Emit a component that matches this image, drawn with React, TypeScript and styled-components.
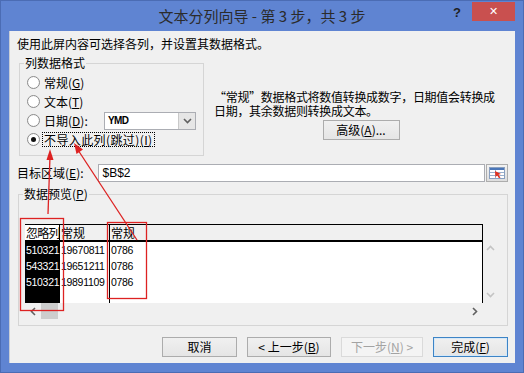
import styled, { createGlobalStyle } from 'styled-components';

const GlobalStyle = createGlobalStyle`
  html, body {
    margin: 0;
    padding: 0;
    background: #5f84d2;
  }
  body {
    font-family: 'Noto Sans CJK SC', 'Liberation Sans', sans-serif;
    font-size: 12px;
    color: #000;
  }
  * {
    box-sizing: border-box;
  }
`;

const previewRows = [
  ['510321', '19670811', '0786'],
  ['543321', '19651211', '0786'],
  ['510321', '19891109', '0786'],
];

const formats = [
  { label: '常规', key: 'G' },
  { label: '文本', key: 'T' },
  { label: '日期', key: 'D' },
];

export default function App() {
  return (
    <>
      <GlobalStyle />
      <Window>
        <TitleBar>
          <span />
          <Title>文本分列向导 - 第 3 步，共 3 步</Title>
          <TitleControls>
            <HelpMark>?</HelpMark>
            <CloseButton>✕</CloseButton>
          </TitleControls>
        </TitleBar>

        <Client>
          <Intro>使用此屏内容可选择各列，并设置其数据格式。</Intro>

          <TopRow>
            <GroupBox $width={185} $height={93}>
              <Legend>列数据格式</Legend>
              <RadioList>
                {formats.map(f => (
                  <RadioRow key={f.key}>
                    <Radio />
                    <RadioLabel $width={f.key === 'D' ? 60 : undefined}>
                      {f.label}(<u>{f.key}</u>){f.key === 'D' ? ':' : ''}
                    </RadioLabel>
                    {f.key === 'D' ? (
                      <DateSelect>
                        <SelectValue>YMD</SelectValue>
                        <SelectArrow>
                          <ChevronDown />
                        </SelectArrow>
                      </DateSelect>
                    ) : null}
                  </RadioRow>
                ))}
                <RadioRow>
                  <Radio $checked />
                  <FocusLabel>
                    不导入此列(跳过)(<u>I</u>)
                  </FocusLabel>
                </RadioRow>
              </RadioList>
            </GroupBox>

            <Description>
              <DescText>
                &ldquo;常规&rdquo;数据格式将数值转换成数字，日期值会转换成
                <br />
                日期，其余数据则转换成文本。
              </DescText>
              <PushButton $width={77}>
                高级(<u>A</u>)...
              </PushButton>
            </Description>
          </TopRow>

          <TargetRow>
            <TargetLabel>
              目标区域(<u>E</u>):
            </TargetLabel>
            <TargetInput>$B$2</TargetInput>
            <RangeButton>
              <RangeIcon />
            </RangeButton>
          </TargetRow>

          <GroupBox $width={490} $height={132} $top={12}>
            <Legend>
              数据预览(<u>P</u>)
            </Legend>
            <Preview>
              <DataArea>
                <HeaderRow>
                  <HeaderCell $ignored>忽略列</HeaderCell>
                  <HeaderCell>常规</HeaderCell>
                  <HeaderCell $divider>常规</HeaderCell>
                </HeaderRow>
                <DataBody>
                  {[0, 1, 2].map(col => (
                    <DataColumn
                      key={col}
                      $ignored={col === 0}
                      $divider={col === 2}
                    >
                      {previewRows.map((row, i) => (
                        <DataLine key={i}>{row[col]}</DataLine>
                      ))}
                    </DataColumn>
                  ))}
                </DataBody>
              </DataArea>
              <VScroll>
                <ScrollGlyph>
                  <ChevronUp />
                </ScrollGlyph>
                <ScrollGlyph>
                  <ChevronDown color="#c4c4c4" />
                </ScrollGlyph>
              </VScroll>
              <HScroll>
                <HArrow>
                  <ChevronLeft />
                </HArrow>
                <HThumb />
                <HArrow>
                  <ChevronRight />
                </HArrow>
              </HScroll>
              <ScrollCorner />
            </Preview>
          </GroupBox>

          <ButtonRow>
            <PushButton $width={75}>取消</PushButton>
            <PushButton $width={84}>
              &lt; 上一步(<u>B</u>)
            </PushButton>
            <PushButton $width={82} $disabled>
              下一步(<u>N</u>) &gt;
            </PushButton>
            <PushButton $width={75} $default>
              完成(<u>F</u>)
            </PushButton>
          </ButtonRow>
        </Client>

        <Annotations width="524" height="373" viewBox="0 0 524 373">
          <rect x="20.5" y="218.5" width="43" height="92" />
          <rect x="107.5" y="222.5" width="39" height="76" />
          <line x1="48" y1="214" x2="50" y2="156" />
          <polygon points="50,149 46.5,160 53.5,160" />
          <line x1="137" y1="240" x2="78" y2="150" />
          <polygon points="74,143 76.5,154 83,149.5" />
        </Annotations>
      </Window>
    </>
  );
}

function ChevronDown({ color = '#606060' }: { color?: string }) {
  return (
    <svg width="9" height="6" viewBox="0 0 9 6">
      <polyline
        points="1,1 4.5,4.5 8,1"
        fill="none"
        stroke={color}
        strokeWidth="1.6"
      />
    </svg>
  );
}

function ChevronUp() {
  return (
    <svg width="9" height="6" viewBox="0 0 9 6">
      <polyline
        points="1,5 4.5,1.5 8,5"
        fill="none"
        stroke="#c4c4c4"
        strokeWidth="1.6"
      />
    </svg>
  );
}

function ChevronLeft() {
  return (
    <svg width="6" height="9" viewBox="0 0 6 9">
      <polyline
        points="5,1 1.5,4.5 5,8"
        fill="none"
        stroke="#606060"
        strokeWidth="1.6"
      />
    </svg>
  );
}

function ChevronRight() {
  return (
    <svg width="6" height="9" viewBox="0 0 6 9">
      <polyline
        points="1,1 4.5,4.5 1,8"
        fill="none"
        stroke="#606060"
        strokeWidth="1.6"
      />
    </svg>
  );
}

function RangeIcon() {
  return (
    <svg width="16" height="12" viewBox="0 0 16 12">
      <rect x="0.5" y="0.5" width="15" height="11" fill="#fff" stroke="#8aa0c0" />
      <rect x="1" y="1" width="14" height="2" fill="#4a76b8" />
      <line x1="1" y1="5.5" x2="15" y2="5.5" stroke="#9ab0cc" />
      <line x1="1" y1="8.5" x2="15" y2="8.5" stroke="#9ab0cc" />
      <line x1="6.5" y1="3" x2="6.5" y2="11" stroke="#9ab0cc" />
      <polygon points="6,4 12,7 9.5,7.8 11.5,10.5 10,11.3 8.2,8.6 6.5,10" fill="#e03020" />
    </svg>
  );
}

const Window = styled.div`
  position: relative;
  width: 524px;
  height: 373px;
  background: #5f84d2;
  border: 1px solid #4b6cb4;
  display: flex;
  flex-direction: column;
`;

const TitleBar = styled.div`
  height: 30px;
  display: grid;
  grid-template-columns: 1fr auto 1fr;
  align-items: start;
`;

const Title = styled.div`
  padding-top: 5px;
  font-size: 15px;
  line-height: 20px;
  color: #2b2b2b;
  white-space: nowrap;
`;

const TitleControls = styled.div`
  display: flex;
  justify-content: flex-end;
  align-items: flex-start;
  gap: 11px;
  padding-right: 8px;
`;

const HelpMark = styled.span`
  margin-top: 4px;
  font-family: 'Liberation Sans', sans-serif;
  font-weight: bold;
  font-size: 13px;
  color: #1f1f1f;
`;

const CloseButton = styled.div`
  width: 43px;
  height: 19px;
  margin-top: 1px;
  background: #c9504f;
  color: #fff;
  font-family: 'DejaVu Sans', sans-serif;
  font-weight: bold;
  font-size: 11px;
  display: flex;
  align-items: center;
  justify-content: center;
`;

const Client = styled.div`
  margin-left: 8px;
  width: 506px;
  height: 332px;
  background: #f0f0f0;
  border-left: 1px solid #c8cdd6;
  padding: 0 7px;
  display: flex;
  flex-direction: column;
`;

const Intro = styled.div`
  margin-top: 5px;
  line-height: 16px;
  white-space: nowrap;
`;

const TopRow = styled.div`
  display: flex;
  align-items: flex-start;
  gap: 10px;
  margin-top: 11px;
  margin-left: 1px;
`;

const GroupBox = styled.div<{ $width: number; $height: number; $top?: number }>`
  position: relative;
  width: ${p => p.$width}px;
  height: ${p => p.$height}px;
  margin-top: ${p => p.$top ?? 0}px;
  margin-left: 1px;
  border: 1px solid #d5d5d5;
  flex-shrink: 0;
`;

const Legend = styled.span`
  position: absolute;
  top: -9px;
  left: 4px;
  padding: 0 1px;
  line-height: 16px;
  background: #f0f0f0;
  white-space: nowrap;
`;

const RadioList = styled.div`
  display: flex;
  flex-direction: column;
  padding: 9px 0 0 7px;
`;

const RadioRow = styled.div`
  display: flex;
  align-items: center;
  height: 19px;
`;

const Radio = styled.span<{ $checked?: boolean }>`
  width: 13px;
  height: 13px;
  border-radius: 50%;
  border: 1px solid #8c8c8c;
  background: radial-gradient(circle, #fff 55%, #e8e8e8 100%);
  display: flex;
  align-items: center;
  justify-content: center;
  margin-right: 4px;
  flex-shrink: 0;

  &::after {
    content: '';
    width: 5px;
    height: 5px;
    border-radius: 50%;
    background: ${p => (p.$checked ? '#111' : 'transparent')};
  }
`;

const RadioLabel = styled.span<{ $width?: number }>`
  line-height: 16px;
  white-space: nowrap;
  width: ${p => (p.$width ? `${p.$width}px` : 'auto')};
`;

const FocusLabel = styled.span`
  line-height: 13px;
  white-space: nowrap;
  margin-left: -1px;
  padding: 0 1px;
  letter-spacing: 0.4px;
  outline: 1px dotted #000;
`;

const DateSelect = styled.div`
  width: 92px;
  height: 18px;
  display: flex;
  border: 1px solid #abadb3;
  background: #fff;
`;

const SelectValue = styled.span`
  flex: 1;
  padding-left: 3px;
  font-family: 'Liberation Sans', sans-serif;
  font-weight: bold;
  font-size: 10px;
  letter-spacing: -0.6px;
  line-height: 16px;
`;

const SelectArrow = styled.span`
  width: 17px;
  border-left: 1px solid #c9c9c9;
  background: #e6e6e6;
  display: flex;
  align-items: center;
  justify-content: center;
`;

const Description = styled.div`
  width: 294px;
  margin-top: 27px;
  display: flex;
  flex-direction: column;
  align-items: center;
`;

const DescText = styled.div`
  align-self: stretch;
  line-height: 14px;
  white-space: nowrap;
  letter-spacing: -0.3px;
`;

const PushButton = styled.div<{ $width: number; $disabled?: boolean; $default?: boolean }>`
  width: ${p => p.$width}px;
  height: 20px;
  margin-top: 2px;
  display: flex;
  align-items: center;
  justify-content: center;
  white-space: nowrap;
  line-height: 16px;
  color: ${p => (p.$disabled ? '#a3a3a3' : '#000')};
  background: ${p =>
    p.$disabled ? '#f4f4f4' : 'linear-gradient(#f0f0f0, #e5e5e5)'};
  border: 1px solid
    ${p => (p.$default ? '#3d84c6' : p.$disabled ? '#dadada' : '#acacac')};
  box-shadow: ${p => (p.$default ? 'inset 0 0 0 1px #d6e8f7' : 'none')};
`;

const TargetRow = styled.div`
  display: flex;
  align-items: center;
  margin-top: 8px;
  height: 18px;
`;

const TargetLabel = styled.span`
  width: 81px;
  line-height: 16px;
  white-space: nowrap;
`;

const TargetInput = styled.div`
  width: 390px;
  height: 18px;
  border: 1px solid #abadb3;
  background: #fff;
  padding-left: 4px;
  font-family: 'Liberation Sans', sans-serif;
  font-size: 12px;
  line-height: 16px;
`;

const RangeButton = styled.div`
  width: 22px;
  height: 18px;
  margin-left: 1px;
  border: 1px solid #adadad;
  background: linear-gradient(#f2f2f2, #dedede);
  display: flex;
  align-items: center;
  justify-content: center;
`;

const Preview = styled.div`
  margin: 29px 0 0 6px;
  display: grid;
  grid-template-columns: 458px 14px;
  grid-template-rows: 79px 16px;
`;

const DataArea = styled.div`
  display: flex;
  flex-direction: column;
  background: #fff;
  border-right: 1px solid #000;
  overflow: hidden;
`;

const HeaderRow = styled.div`
  display: grid;
  grid-template-columns: 35px 49px 1fr;
  height: 18px;
  background: #f0f0f0;
  border-top: 1px solid #000;
  border-bottom: 2px solid #000;
`;

const HeaderCell = styled.div<{ $ignored?: boolean; $divider?: boolean }>`
  padding-left: 1px;
  line-height: 15px;
  white-space: nowrap;
  letter-spacing: ${p => (p.$ignored ? '-0.7px' : '0')};
  overflow: hidden;
  border-left: ${p => (p.$divider ? '1px solid #000' : 'none')};
  border-right: ${p => (p.$ignored ? '1px solid #000' : 'none')};
  background: ${p => (p.$ignored ? '#fff' : 'transparent')};
`;

const DataBody = styled.div`
  flex: 1;
  display: grid;
  grid-template-columns: 35px 49px 1fr;
`;

const DataColumn = styled.div<{ $ignored?: boolean; $divider?: boolean }>`
  background: ${p => (p.$ignored ? '#000' : 'transparent')};
  color: ${p => (p.$ignored ? '#fff' : '#000')};
  border-left: ${p => (p.$divider ? '1px solid #000' : 'none')};
  overflow: hidden;
  padding-left: 1px;
`;

const DataLine = styled.div`
  height: 16px;
  line-height: 16px;
  font-family: 'Liberation Sans', sans-serif;
  font-size: 10.5px;
  letter-spacing: -0.3px;
  white-space: nowrap;
`;

const VScroll = styled.div`
  display: flex;
  flex-direction: column;
  justify-content: space-between;
  align-items: center;
  padding: 21px 0 5px;
  background: #f0f0f0;
`;

const ScrollGlyph = styled.span`
  display: flex;
`;

const HScroll = styled.div`
  display: flex;
  align-items: center;
  background: #f0f0f0;
`;

const HArrow = styled.span`
  display: flex;
  width: 16px;
  justify-content: center;
  &:last-child {
    margin-left: auto;
  }
`;

const HThumb = styled.span`
  width: 17px;
  height: 16px;
  background: #cdcdcd;
`;

const ScrollCorner = styled.div`
  background: #f0f0f0;
`;

const ButtonRow = styled.div`
  display: flex;
  justify-content: flex-end;
  gap: 10px;
  margin-top: 11px;

  & > div {
    margin-top: 0;
  }
`;

const Annotations = styled.svg`
  position: absolute;
  left: -1px;
  top: -1px;
  pointer-events: none;

  rect,
  line {
    fill: none;
    stroke: #dd2222;
    stroke-width: 1.3;
  }

  polygon {
    fill: #dd2222;
  }
`;
